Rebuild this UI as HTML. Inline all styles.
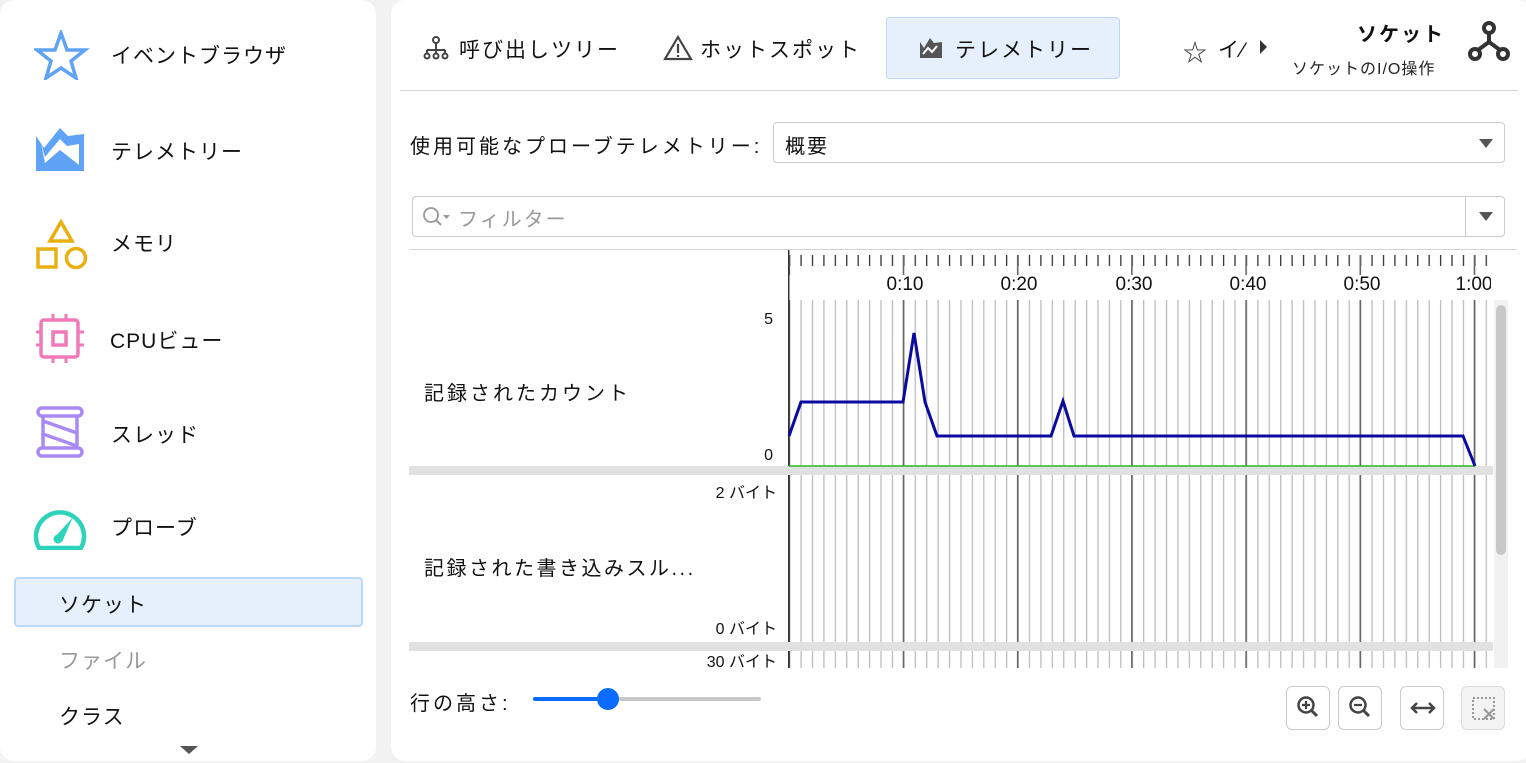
<!DOCTYPE html>
<html><head><meta charset="utf-8"><style>
*{margin:0;padding:0;box-sizing:border-box}
body{width:1526px;height:763px;background:#f2f2f2;font-family:"Liberation Sans","Noto Sans CJK JP",sans-serif;color:#111;position:relative;overflow:hidden}
.p{position:absolute;background:#fff;border-radius:14px}
.t{position:absolute;white-space:nowrap}
.nav{font-size:21px;letter-spacing:1px}
.tab{font-size:21px;letter-spacing:2px}
.btn{position:absolute;top:686px;width:44px;height:44px;border:1.5px solid #ccc;border-radius:6px;background:#fff}
</style></head><body>
<div class="p" style="left:0;top:0;width:376px;height:761px"></div>
<div class="p" style="left:391px;top:0;width:1140px;height:761px"></div>

<!-- left nav -->
<svg class="t" style="left:34px;top:30px" width="56" height="50" viewBox="0 0 56 50"><polygon points="27,3 33,20 51,20 37,31 42,48 27,38 12,48 17,31 3,20 21,20" fill="none" stroke="#5ea3f5" stroke-width="3.5" stroke-linejoin="miter"/></svg>
<div class="t nav" style="left:111px;top:40px">イベントブラウザ</div>
<svg class="t" style="left:36px;top:126px" width="50" height="46" viewBox="0 0 50 46"><path d="M0,10 L8,22 L24,2 L32,10 L48,8 L48,45 L0,45 Z" fill="#5ea3f5"/><path d="M5,17 L9,31 L24,13 L31,20 L43,18 L43,39 L24,24 L9,37" fill="#fff"/></svg>
<div class="t nav" style="left:111px;top:136px">テレメトリー</div>
<svg class="t" style="left:36px;top:218px" width="52" height="54"><polygon points="25,4 36,23 14,23" fill="none" stroke="#e8b010" stroke-width="3.5"/><rect x="2" y="31" width="18" height="18" fill="none" stroke="#e8b010" stroke-width="3.5"/><circle cx="40" cy="40" r="9.5" fill="none" stroke="#e8b010" stroke-width="3.5"/></svg>
<div class="t nav" style="left:111px;top:228px">メモリ</div>
<svg class="t" style="left:36px;top:314px" width="50" height="50"><rect x="5" y="6" width="37" height="37" rx="3" fill="none" stroke="#f07ab8" stroke-width="3.5"/><rect x="17" y="18" width="13" height="13" fill="none" stroke="#f07ab8" stroke-width="3.5"/><g stroke="#f07ab8" stroke-width="3"><path d="M17,0v6M30,0v6M17,43v6M30,43v6M0,18h5M0,31h5M42,18h6M42,31h6"/></g></svg>
<div class="t nav" style="left:110px;top:325px">CPUビュー</div>
<svg class="t" style="left:36px;top:406px" width="50" height="54"><g fill="none" stroke="#a98af5" stroke-width="3.5"><rect x="2" y="2" width="44" height="8" rx="4"/><rect x="2" y="42" width="44" height="8" rx="4"/><path d="M7,10v32M41,10v32M7,15l34,12M7,28l34,12"/></g></svg>
<div class="t nav" style="left:111px;top:419px">スレッド</div>
<svg class="t" style="left:33px;top:505px" width="56" height="45"><path d="M6,43 A24,24 0 1 1 48,43 Z" fill="none" stroke="#2ed3bb" stroke-width="4.5" stroke-linejoin="round"/><path d="M22,32 L40,12 L29,37 Z" fill="#2ed3bb"/><circle cx="25" cy="34" r="4.5" fill="#2ed3bb"/></svg>
<div class="t nav" style="left:111px;top:512px">プローブ</div>
<div class="t" style="left:14px;top:577px;width:349px;height:50px;background:#e6f0fd;border:2px solid #bcd8fb;border-radius:4px"></div>
<div class="t nav" style="left:59px;top:589px">ソケット</div>
<div class="t nav" style="left:59px;top:645px;color:#999">ファイル</div>
<div class="t nav" style="left:59px;top:701px">クラス</div>
<div class="t" style="left:180px;top:746px;width:0;height:0;border-left:9px solid transparent;border-right:9px solid transparent;border-top:8px solid #555"></div>

<!-- tabs -->
<svg class="t" style="left:423px;top:35px" width="26" height="26"><g fill="none" stroke="#444" stroke-width="2"><circle cx="13" cy="5" r="3"/><path d="M13,8v7M4,15h18M4,15v4M13,15v4M22,15v4"/><circle cx="4" cy="21" r="2.5"/><circle cx="13" cy="21" r="2.5"/><circle cx="22" cy="21" r="2.5"/></g></svg>
<div class="t tab" style="left:459px;top:34px">呼び出しツリー</div>
<svg class="t" style="left:663px;top:35px" width="30" height="26"><path d="M15,2 L28,24 L2,24 Z" fill="none" stroke="#444" stroke-width="2.2"/><path d="M15,9v9M15,20v2" stroke="#444" stroke-width="2.2"/></svg>
<div class="t tab" style="left:700px;top:34px">ホットスポット</div>
<div class="t" style="left:886px;top:17px;width:234px;height:62px;background:#e6f0fd;border:1.5px solid #bcd8fb;border-radius:4px"></div>
<svg class="t" style="left:918px;top:36px" width="26" height="24"><path d="M2,6 L6,12 L12,2 L16,7 L24,6 L24,22 L2,22 Z" fill="#555"/><path d="M5,18 L10,12 L14,16 L19,10" fill="none" stroke="#fff" stroke-width="2"/></svg>
<div class="t tab" style="left:955px;top:34px">テレメトリー</div>
<div class="t" style="left:1183px;top:33px;font-size:24px;color:#333">☆</div>
<div class="t tab" style="left:1218px;top:34px">イ⁄</div>
<div class="t" style="left:1260px;top:40px;width:0;height:0;border-top:7px solid transparent;border-bottom:7px solid transparent;border-left:7px solid #333"></div>
<div class="t" style="left:1357px;top:18px;font-size:20px;font-weight:bold;letter-spacing:2px">ソケット</div>
<div class="t" style="left:1292px;top:55px;font-size:16px;color:#222;letter-spacing:1px">ソケットのI/O操作</div>
<svg class="t" style="left:1468px;top:20px" width="44" height="44"><g fill="none" stroke="#333" stroke-width="4"><circle cx="21" cy="8" r="5"/><circle cx="7" cy="34" r="5"/><circle cx="35" cy="34" r="5"/><path d="M21,13v9M21,22L10,30M21,22L32,30"/></g></svg>
<div class="t" style="left:400px;top:90px;width:1118px;height:1px;background:#d4d4d4"></div>

<div class="t" style="left:410px;top:130px;font-size:20px;letter-spacing:3px">使用可能なプローブテレメトリー:</div>
<div class="t" style="left:773px;top:122px;width:732px;height:41px;border:1.5px solid #ccc;border-radius:4px"></div>
<div class="t" style="left:785px;top:130px;font-size:20px;letter-spacing:2px">概要</div>
<div class="t" style="left:1479px;top:139px;border-left:7px solid transparent;border-right:7px solid transparent;border-top:9px solid #555;width:0"></div>
<div class="t" style="left:412px;top:196px;width:1093px;height:41px;border:1.5px solid #ccc;border-radius:4px"></div>
<div class="t" style="left:1465px;top:197px;width:1px;height:39px;background:#ccc"></div>
<div class="t" style="left:1479px;top:212px;border-left:7px solid transparent;border-right:7px solid transparent;border-top:9px solid #555;width:0"></div>
<svg class="t" style="left:421px;top:205px" width="34" height="24"><circle cx="10" cy="10" r="7" fill="none" stroke="#999" stroke-width="1.8"/><path d="M15,15l5,5" stroke="#999" stroke-width="2"/><path d="M22,10h7l-3.5,4z" fill="#999"/></svg>
<div class="t" style="left:458px;top:203px;font-size:20px;color:#999;letter-spacing:2px">フィルター</div>
<div class="t" style="left:409px;top:249px;width:1108px;height:1px;background:#d4d4d4"></div>

<!-- chart -->
<svg class="t" style="left:0;top:0" width="1526" height="763">
<defs>
<pattern id="mn" patternUnits="userSpaceOnUse" x="789" y="0" width="11.42" height="10"><rect x="0" y="0" width="1.3" height="10" fill="#bdbdbd"/></pattern>
<pattern id="mj" patternUnits="userSpaceOnUse" x="788.5" y="0" width="114.2" height="10"><rect x="0" y="0" width="1.6" height="10" fill="#666"/></pattern>
<pattern id="tk" patternUnits="userSpaceOnUse" x="789" y="0" width="11.42" height="10"><rect x="0" y="0" width="1.3" height="10" fill="#333"/></pattern>
</defs>
<rect x="789" y="255" width="700" height="11" fill="url(#tk)"/>
<rect x="789" y="255" width="700" height="20" fill="url(#mj)"/>
<rect x="789" y="300" width="700" height="368" fill="url(#mn)"/>
<rect x="789" y="300" width="700" height="368" fill="url(#mj)"/>
<rect x="788" y="250" width="1.5" height="418" fill="#333"/>
<g font-family="Liberation Sans,sans-serif" font-size="19" fill="#111" text-anchor="middle">
<text x="905" y="290">0:10</text><text x="1019" y="290">0:20</text><text x="1134" y="290">0:30</text><text x="1248" y="290">0:40</text><text x="1362" y="290">0:50</text><text x="1474" y="290">1:00</text>
</g>
<rect x="1491" y="250" width="30" height="50" fill="#fff"/>
<rect x="409" y="466" width="1084" height="9" fill="#e1e1e1"/>
<rect x="409" y="642" width="1084" height="9" fill="#e1e1e1"/>
<line x1="789" y1="466" x2="1475" y2="466" stroke="#22bb22" stroke-width="1.6"/>
<polyline points="789,436 801,402 903,402 914,333 925,402 937,436 1051,436 1063,401 1074,436 1463,436 1475,466" fill="none" stroke="#0a0aa0" stroke-width="3"/>
<rect x="1494" y="300" width="14" height="368" fill="#f1f1f1"/>
<rect x="1496" y="305" width="10" height="250" rx="5" fill="#c8c8c8"/>
<g font-family="Liberation Sans,Noto Sans CJK JP,sans-serif" fill="#111" text-anchor="end" font-size="16">
<text x="773" y="324">5</text><text x="773" y="460">0</text>
<text x="777" y="498">2 バイト</text><text x="777" y="634">0 バイト</text><text x="777" y="667">30 バイト</text>
</g>
<rect x="409" y="668" width="1100" height="20" fill="#fff"/>
</svg>
<div class="t" style="left:424px;top:377px;font-size:20px;letter-spacing:3px">記録されたカウント</div>
<div class="t" style="left:424px;top:552px;font-size:20px;letter-spacing:2.5px">記録された書き込みスル...</div>

<!-- bottom -->
<div class="t" style="left:410px;top:687px;font-size:20px;letter-spacing:3px">行の高さ:</div>
<div class="t" style="left:533px;top:697px;width:228px;height:4px;background:#c8c8c8;border-radius:2px"></div>
<div class="t" style="left:533px;top:697px;width:75px;height:4px;background:#0a6cff;border-radius:2px"></div>
<div class="t" style="left:597px;top:688px;width:22px;height:22px;background:#0a6cff;border-radius:50%"></div>
<div class="btn" style="left:1286px"><svg width="44" height="44"><circle cx="19" cy="18" r="7.5" fill="none" stroke="#444" stroke-width="2.5"/><path d="M15,18h8M19,14v8" stroke="#444" stroke-width="2.2"/><path d="M24,23l6,6" stroke="#444" stroke-width="3"/></svg></div>
<div class="btn" style="left:1338px"><svg width="44" height="44"><circle cx="19" cy="18" r="7.5" fill="none" stroke="#444" stroke-width="2.5"/><path d="M15,18h8" stroke="#444" stroke-width="2.2"/><path d="M24,23l6,6" stroke="#444" stroke-width="3"/></svg></div>
<div class="btn" style="left:1400px"><svg width="44" height="44"><path d="M12,21h20M16,16l-5,5l5,5M28,16l5,5l-5,5" fill="none" stroke="#444" stroke-width="2.5"/></svg></div>
<div class="btn" style="left:1461px;background:#f3f3f3;border-color:#ddd"><svg width="44" height="44"><rect x="11" y="11" width="21" height="21" fill="none" stroke="#999" stroke-width="2" stroke-dasharray="2,2"/><path d="M22,22l10,10M32,22l-10,10" stroke="#999" stroke-width="2.2"/></svg></div>
</body></html>
